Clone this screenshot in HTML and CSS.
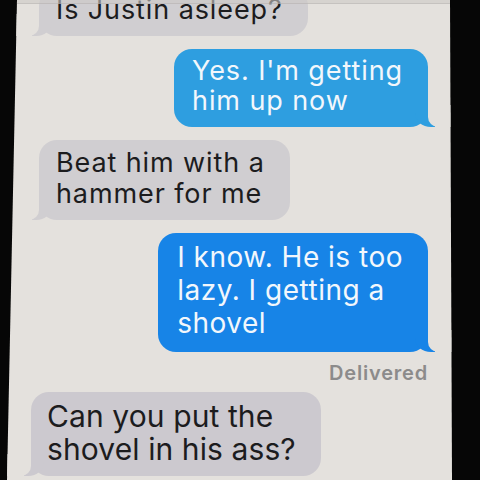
FILE: index.html
```html
<!DOCTYPE html>
<html lang="en">
<head>
<meta charset="utf-8">
<title>Messages</title>
<link rel="stylesheet" href="styles.css">
</head>
<body>
<div class="phone">
  <div class="bezel left"></div>
  <div class="screen">
    <div class="topbar"></div>
    <div class="thread">
      <div class="row in far first"><div class="bubble">Is Justin asleep?</div></div>
      <div class="row out far light"><div class="bubble">Yes. I'm getting<br>him up now</div></div>
      <div class="row in far tall"><div class="bubble">Beat him with a<br>hammer for me</div></div>
      <div class="row out mid"><div class="bubble">I know. He is too<br>lazy. I getting a<br>shovel</div></div>
      <div class="status">Delivered</div>
      <div class="row in near"><div class="bubble">Can you put the<br>shovel in his ass?</div></div>
    </div>
  </div>
  <div class="bezel right"></div>
</div>
</body>
</html>
```
FILE: styles.css
```css
html, body {
  margin: 0;
  padding: 0;
  background: #060606;
}

body {
  width: 480px;
  height: 480px;
  overflow: hidden;
  font-family: Inter, "Noto Sans", "Liberation Sans", sans-serif;
}

.phone {
  display: grid;
  grid-template-columns: 7px 445px 28px;
  width: 480px;
  height: 480px;
  background: #060606;
}

.bezel {
  height: 480px;
  background: #060606;
}

.screen {
  --bg: #e4e1dd;
  position: relative;
  width: 445px;
  height: 480px;
  background: #e4e1dd;
  clip-path: polygon(10px 0, 443px 0, 445px 100%, 0 100%);
  overflow: hidden;
}

.topbar {
  position: absolute;
  top: 0;
  left: 0;
  right: 0;
  height: 3px;
  background: rgba(205, 201, 199, 0.6);
  border-bottom: 1px solid rgba(160, 156, 156, 0.3);
  z-index: 3;
}

.thread {
  display: flex;
  flex-direction: column;
  margin-top: -12px;
  padding: 0 24px 0 32px;
}

.row {
  display: flex;
  margin-bottom: 13px;
}

.row.in { justify-content: flex-start; }
.row.out { justify-content: flex-end; }

.bubble {
  position: relative;
  padding: 7px 25px 11px 17px;
  border-radius: 18px;
  white-space: nowrap;
}

/* rows further from the camera render slightly smaller in the photo */
.far .bubble {
  font-size: 27px;
  line-height: 30px;
  letter-spacing: 0.9px;
}

.far.tall .bubble {
  line-height: 31px;
}

.mid .bubble {
  font-size: 28px;
  line-height: 33px;
  letter-spacing: 0.5px;
  padding: 8px 25px 12px 19px;
}

.near {
  margin-left: -8px;
}

.near .bubble {
  font-size: 30px;
  line-height: 33px;
  letter-spacing: 0.1px;
  padding: 8px 25px 10px 16px;
}

.in .bubble {
  background: #d0ced1;
  color: #1c1c1e;
}

.in.near .bubble {
  background: #ccc9cf;
}

.out .bubble {
  background: #1784e7;
  color: #f2f7fc;
}

.out.light .bubble {
  background: #2e9ee0;
  padding-left: 18px;
}

/* bubble tails */
.bubble::before,
.bubble::after {
  content: "";
  position: absolute;
  bottom: 0;
  height: 22px;
}

.out .bubble::before {
  right: -7px;
  width: 20px;
  background: inherit;
  border-bottom-left-radius: 16px 14px;
}

.out .bubble::after {
  right: -26px;
  width: 26px;
  background: var(--bg);
  border-bottom-left-radius: 10px;
}

.in .bubble::before {
  left: -7px;
  width: 20px;
  background: inherit;
  border-bottom-right-radius: 16px 14px;
}

.in .bubble::after {
  left: -26px;
  width: 26px;
  background: var(--bg);
  border-bottom-right-radius: 10px;
}

.status {
  text-align: right;
  font-size: 20px;
  font-weight: 600;
  letter-spacing: 0.8px;
  color: #8c8b8b;
  margin: -3px 0 8px;
  line-height: 22px;
}
```
